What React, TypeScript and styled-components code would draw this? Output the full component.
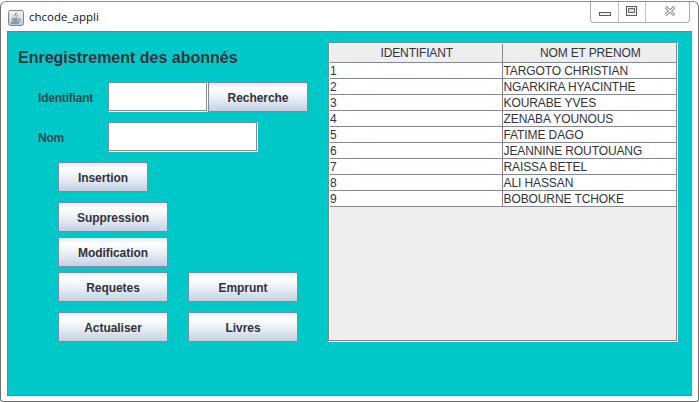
import React from "react";
import styled, { createGlobalStyle } from "styled-components";

const GlobalStyle = createGlobalStyle`
  html, body {
    margin: 0;
    padding: 0;
    background: #fff;
  }
`;

const Window = styled.div`
  box-sizing: border-box;
  width: 699px;
  height: 401px;
  margin-top: 1px;
  padding: 0 6px 5px 6px;
  background: #fff;
  border: 1px solid #6f6f6f;
  border-top-color: #8a8a8a;
  border-radius: 6px 6px 3px 3px;
  display: flex;
  flex-direction: column;
  font-family: "Liberation Sans", Arial, sans-serif;
  color: #333;
`;

const TitleBar = styled.div`
  height: 29px;
  flex-shrink: 0;
  display: flex;
  align-items: flex-start;
  margin-left: 1px;
`;

const AppIcon = styled.svg`
  width: 16px;
  height: 16px;
  margin-top: 8px;
`;

const Title = styled.span`
  margin: 7px 0 0 5px;
  font-family: "Open Sans", "Noto Sans", sans-serif;
  font-size: 11.5px;
  line-height: 16px;
  color: #111;
`;

const Controls = styled.div`
  margin-left: auto;
  margin-right: 2px;
  display: flex;
  height: 21px;
  box-sizing: border-box;
  border: 1px solid #a9a9a9;
  border-top: 0;
  border-radius: 0 0 4px 4px;
`;

const ControlButton = styled.div<{ $width: number; $last?: boolean }>`
  box-sizing: border-box;
  width: ${p => p.$width + 1}px;
  display: flex;
  align-items: center;
  justify-content: center;
  padding-bottom: 2px;
  padding-left: ${p => (p.$last ? "5px" : "0")};
  border-right: ${p => (p.$last ? "0" : "1px solid #c4c4c4")};
`;

const Panel = styled.div`
  flex: 1;
  display: flex;
  background: #00c8c8;
  border: 1px solid #7c7c7c;
  border-right-color: #8a8a8a;
  padding: 10px 13px 52px 10px;
`;

const Form = styled.div`
  width: 310px;
  flex-shrink: 0;
  display: flex;
  flex-direction: column;
`;

const Heading = styled.h1`
  margin: 7px 0 15px 0;
  font-size: 16px;
  line-height: 18px;
  font-weight: bold;
  color: #333339;
`;

const Row = styled.div<{ $indent: number; $top: number; $gap?: number }>`
  display: flex;
  align-items: stretch;
  height: 30px;
  margin-left: ${p => p.$indent}px;
  margin-top: ${p => p.$top}px;
  gap: ${p => p.$gap || 0}px;
`;

const Label = styled.label`
  width: 70px;
  align-self: center;
  margin-top: 2px;
  font-size: 12px;
  font-weight: bold;
  letter-spacing: -0.2px;
  color: #2f4a50;
`;

const Field = styled.input<{ $width: number }>`
  box-sizing: border-box;
  width: ${p => p.$width}px;
  height: 30px;
  margin: 0;
  padding: 0;
  background: #fff;
  border: 1px solid #fff;
  border-top-color: #7f8b9b;
  border-left-color: #7f8b9b;
  outline: 0;
  box-shadow: inset -1px -1px 0 #7f8b9b;
`;

const Button = styled.button<{ $width: number }>`
  box-sizing: border-box;
  width: ${p => p.$width}px;
  height: 30px;
  margin: 0;
  padding: 1px 0 0 0;
  border: 1px solid #7f8a9e;
  background: linear-gradient(#e3eaf3 0%, #ffffff 20%, #e8eef6 55%, #c3d1e3 100%);
  font-family: inherit;
  font-size: 12px;
  font-weight: bold;
  letter-spacing: -0.05px;
  color: #333339;
`;

const TableFrame = styled.div`
  box-sizing: border-box;
  width: 350px;
  height: 300px;
  background: #eeeeee;
  border: 1px solid #fff;
  border-top-color: #7f8b9b;
  border-left-color: #7f8b9b;
  box-shadow: inset -1px -1px 0 #7f8b9b, inset 1px 1px 0 #fff;
  padding: 1px;
`;

const DataTable = styled.table`
  width: 346px;
  border-collapse: collapse;
  table-layout: fixed;
  font-size: 12px;
`;

const HeaderCell = styled.th`
  height: 18px;
  padding: 1px 0 0 2px;
  box-sizing: border-box;
  background: #eeeeee;
  border-right: 1px solid #7f8b9b;
  border-bottom: 1px solid #7f8b9b;
  font-weight: normal;
  text-align: center;
  letter-spacing: -0.15px;
  color: #333339;
  &:first-child {
    width: 172px;
  }
  &:last-child {
    border-right: 0;
  }
`;

const Cell = styled.td`
  height: 14px;
  padding: 1px 0 0 0;
  background: #fff;
  border-right: 1px solid #7f8b9b;
  border-bottom: 1px solid #7f8b9b;
  line-height: 14px;
  white-space: nowrap;
  letter-spacing: -0.1px;
  color: #333339;
  &:last-child {
    border-right: 0;
    padding-left: 1px;
  }
`;

const abonnes = [
  "TARGOTO CHRISTIAN",
  "NGARKIRA HYACINTHE",
  "KOURABE YVES",
  "ZENABA YOUNOUS",
  "FATIME DAGO",
  "JEANNINE ROUTOUANG",
  "RAISSA BETEL",
  "ALI HASSAN",
  "BOBOURNE TCHOKE",
];

function JavaIcon() {
  return (
    <AppIcon viewBox="0 0 16 16">
      <defs>
        <linearGradient id="iconBg" x1="0" y1="0" x2="0" y2="1">
          <stop offset="0" stopColor="#f4f6f9" />
          <stop offset="1" stopColor="#b9c5d6" />
        </linearGradient>
      </defs>
      <rect x="0.5" y="0.5" width="15" height="15" rx="2" fill="url(#iconBg)" stroke="#7d8796" />
      <path d="M8.5 2 C9.5 4 6.5 5 7 7.5 C5.5 6 7 3.5 8.5 2 Z M10 4.5 C10 6 8.5 6.5 9 8 C7.8 7 8.5 5 10 4.5 Z" fill="#e2661c" />
      <path d="M4 9 H10 M4.5 11 H9.5 M3 13 H11" stroke="#3e6690" strokeWidth="1" fill="none" />
      <path d="M10.5 9 C12.5 8.5 13 11 10 11.5" stroke="#3e6690" strokeWidth="0.8" fill="none" />
    </AppIcon>
  );
}

export default function App() {
  return (
    <>
      <GlobalStyle />
      <Window>
        <TitleBar>
          <JavaIcon />
          <Title>chcode_appli</Title>
          <Controls>
            <ControlButton $width={27}>
              <svg width="12" height="10" viewBox="0 0 12 10">
                <rect x="0.5" y="6.5" width="11" height="3" fill="#f2f2f2" stroke="#5a5a5a" />
              </svg>
            </ControlButton>
            <ControlButton $width={26}>
              <svg width="12" height="10" viewBox="0 0 12 10">
                <rect x="0.5" y="0.5" width="10" height="9" fill="#f2f2f2" stroke="#5a5a5a" />
                <rect x="2.5" y="2.5" width="6" height="4" fill="#d9d9d9" stroke="#6a6a6a" />
              </svg>
            </ControlButton>
            <ControlButton $width={42} $last>
              <svg width="12" height="10" viewBox="0 0 12 10">
                <path d="M1.5 1 L10.5 9 M10.5 1 L1.5 9" stroke="#6e6e6e" strokeWidth="3" />
                <path d="M1.5 1 L10.5 9 M10.5 1 L1.5 9" stroke="#f4f4f4" strokeWidth="1.4" />
              </svg>
            </ControlButton>
          </Controls>
        </TitleBar>
        <Panel>
          <Form>
            <Heading>Enregistrement des abonnés</Heading>
            <Row $indent={20} $top={0}>
              <Label>Identifiant</Label>
              <Field $width={100} />
              <Button $width={100}>Recherche</Button>
            </Row>
            <Row $indent={20} $top={10}>
              <Label>Nom</Label>
              <Field $width={150} />
            </Row>
            <Row $indent={40} $top={10}>
              <Button $width={90}>Insertion</Button>
            </Row>
            <Row $indent={40} $top={10}>
              <Button $width={110}>Suppression</Button>
            </Row>
            <Row $indent={40} $top={5}>
              <Button $width={110}>Modification</Button>
            </Row>
            <Row $indent={40} $top={5} $gap={20}>
              <Button $width={110}>Requetes</Button>
              <Button $width={110}>Emprunt</Button>
            </Row>
            <Row $indent={40} $top={10} $gap={20}>
              <Button $width={110}>Actualiser</Button>
              <Button $width={110}>Livres</Button>
            </Row>
          </Form>
          <TableFrame>
            <DataTable>
              <thead>
                <tr>
                  <HeaderCell>IDENTIFIANT</HeaderCell>
                  <HeaderCell>NOM ET PRENOM</HeaderCell>
                </tr>
              </thead>
              <tbody>
                {abonnes.map((nom, i) => (
                  <tr key={nom}>
                    <Cell>{i + 1}</Cell>
                    <Cell>{nom}</Cell>
                  </tr>
                ))}
              </tbody>
            </DataTable>
          </TableFrame>
        </Panel>
      </Window>
    </>
  );
}
